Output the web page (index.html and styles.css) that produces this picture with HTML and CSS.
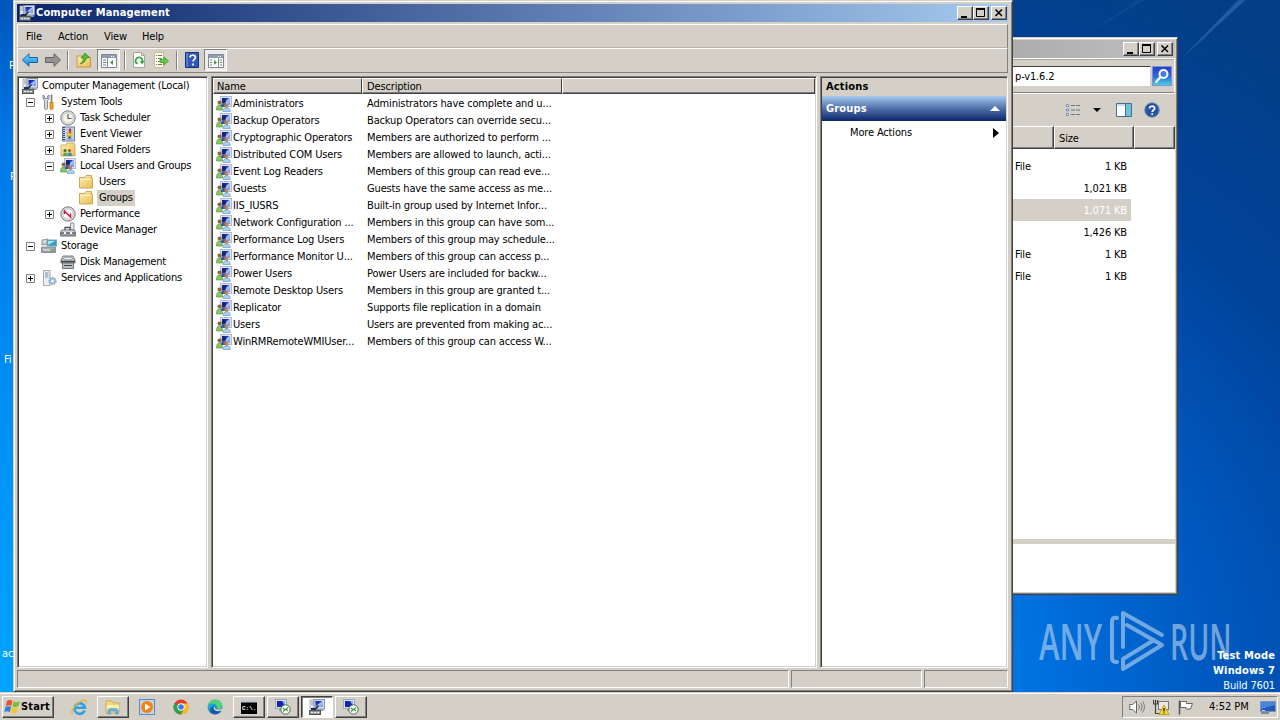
FILE: index.html
```html
<!DOCTYPE html>
<html lang="en">
<head>
    <meta charset="UTF-8">
    <meta name="viewport" content="width=device-width, initial-scale=1.0">
    <title>Computer Management</title>
    <link rel="stylesheet" href="styles.css">
</head>
<body>
    <!-- icon set -->
    <svg class="defs" width="0" height="0">
        <defs>
            <linearGradient id="g-screen" x1="0" y1="0" x2="1" y2="1"><stop offset="0" stop-color="#0a1a9c"/><stop offset=".4" stop-color="#2440c0"/><stop offset=".5" stop-color="#a8c4f4"/><stop offset="1" stop-color="#6f92dd"/></linearGradient>
            <linearGradient id="g-folder" x1="0" y1="0" x2="1" y2="1"><stop offset="0" stop-color="#fdeeb0"/><stop offset="1" stop-color="#e8bd55"/></linearGradient>
            <linearGradient id="g-blue" x1="0" y1="0" x2="0" y2="1"><stop offset="0" stop-color="#7fd8ff"/><stop offset="1" stop-color="#0b84d8"/></linearGradient>
            <linearGradient id="g-metal" x1="0" y1="0" x2="0" y2="1"><stop offset="0" stop-color="#e4e7ea"/><stop offset="1" stop-color="#8b9198"/></linearGradient>
            <linearGradient id="g-edge" x1="0" y1="0" x2="1" y2="1"><stop offset="0" stop-color="#2fc4d6"/><stop offset="1" stop-color="#0b5bb5"/></linearGradient>
        </defs>
        <symbol id="i-mgmt" viewBox="0 0 16 16">
            <rect x="5" y="0.5" width="10.5" height="9.5" fill="#d6dbe6" stroke="#8c93a5"/>
            <rect x="6.5" y="2" width="7.5" height="6" fill="url(#g-screen)"/>
            <path d="M8 10h6l1 2H7z" fill="#9aa3b5"/>
            <rect x="1" y="1" width="3.5" height="9" fill="#e8ebef" stroke="#9299a4" stroke-width=".7"/>
            <path d="M2 3h2M2 5h2" stroke="#6f7780" stroke-width=".7"/>
            <path d="M2 9h4l3-3 1 1-3 4H2z" fill="#1b3050"/>
            <rect x="0.5" y="11.5" width="11" height="4" fill="#8e9897" stroke="#4e5859"/>
            <path d="M2 13.500h2m1 0h2m1 0h2" stroke="#e8eeee"/>
        </symbol>
        <symbol id="i-users" viewBox="0 0 16 16">
            <rect x="4.500" y="0.500" width="11" height="10" fill="#dfe3f4" stroke="#b2b8dc"/>
            <rect x="6" y="2" width="8" height="7" fill="url(#g-screen)"/>
            <circle cx="3.600" cy="6.500" r="2.100" fill="#8a6a3c"/>
            <path d="M0.500 14c0-4 1-5 3-5s3 1 3 5z" fill="#8cc65e" stroke="#4c8a32" stroke-width=".6"/>
            <circle cx="8" cy="4.800" r="2.200" fill="#1d2768"/>
            <path d="M5 11c0-3 1-4 3-4s3.500 1 3.500 4z" fill="#3c56a8"/>
            <path d="M7.500 7.500l1 2.500 1-2.500z" fill="#d8553f"/>
            <circle cx="10.500" cy="10" r="1.900" fill="#b58a52"/>
            <path d="M7 15.500c0-2.800 1.200-3.600 3.600-3.600s3.700.8 3.700 3.600z" fill="#a6d1f0" stroke="#5d8fbd" stroke-width=".6"/>
        </symbol>
        <symbol id="i-folder" viewBox="0 0 16 16">
            <path d="M1.500 3.500h5l1.500-2h5.500v3h1v9.500h-13z" fill="url(#g-folder)" stroke="#c9a04a" stroke-width=".9"/>
            <path d="M2.500 5.500h11" stroke="#fff6cf"/>
        </symbol>
        <symbol id="i-tools" viewBox="0 0 16 16">
            <path d="M2 1v4l1.500 1.500V14c0 2 3 2 3 0V6.500L8 5V1L6.500 2v2.500h-3V2z" fill="#d8dce0" stroke="#6f767d" stroke-width=".8"/>
            <path d="M10.500 0.500v7" stroke="#777" stroke-width="1.600"/>
            <path d="M9 8h3v6.500c0 1.300-3 1.300-3 0z" fill="#f7a51b" stroke="#c9680b" stroke-width=".8"/>
        </symbol>
        <symbol id="i-clock" viewBox="0 0 16 16">
            <circle cx="8" cy="8" r="7.200" fill="#dfe3e9" stroke="#747a83"/>
            <circle cx="8" cy="8" r="5.300" fill="#f8f4e4" stroke="#b7b19b" stroke-width=".6"/>
            <path d="M8 4v4.500h3.500" fill="none" stroke="#525c72" stroke-width="1.200"/>
        </symbol>
        <symbol id="i-event" viewBox="0 0 16 16">
            <rect x="2.500" y="1" width="12" height="14" fill="#c8d4ec" stroke="#6d7f9f"/>
            <path d="M4 1v14" stroke="#2f4571" stroke-width="2" stroke-dasharray="1 1"/>
            <path d="M6.500 4h6M6.500 7h6M6.500 10h6M6.500 13h6" stroke="#7f92bd"/>
            <path d="M9 2.500h2V7H9z" fill="#d93321"/><path d="M7 7.500l5-1v5H7z" fill="#f1bd1c"/><circle cx="9.500" cy="11.500" r="1.300" fill="#1f53b8"/>
        </symbol>
        <symbol id="i-shared" viewBox="0 0 16 16">
            <path d="M1 3h5l1-2h7v2h1v11H1z" fill="url(#g-folder)" stroke="#c9a04a" stroke-width=".8"/>
            <circle cx="5" cy="8.500" r="1.500" fill="#347734"/><path d="M3 14c0-2.500.8-3.500 2.200-3.500S7.500 11.500 7.500 14z" fill="#54a84a"/>
            <circle cx="9.500" cy="8.500" r="1.500" fill="#9d5a22"/><path d="M7.500 14c0-2.500.8-3.500 2.200-3.500s2.300 1 2.300 3.500z" fill="#3f87cb"/>
        </symbol>
        <symbol id="i-perf" viewBox="0 0 16 16">
            <circle cx="8" cy="8" r="7.200" fill="#e2e2e2" stroke="#777"/>
            <circle cx="8" cy="8" r="5.200" fill="#fff" stroke="#aaa" stroke-width=".7"/>
            <path d="M4.500 8V5l6 6V7.500" fill="none" stroke="#d11c3c" stroke-width="1.500"/>
        </symbol>
        <symbol id="i-device" viewBox="0 0 16 16">
            <path d="M10.500 1h3.500v7h-3.500z" fill="#e5e8eb" stroke="#7c838b" stroke-width=".8"/>
            <path d="M5 8V5.500h5V8" fill="none" stroke="#4c5258" stroke-width="1.300"/>
            <path d="M2 8h12l1.500 2v4H0.500v-4z" fill="url(#g-metal)" stroke="#4f565e" stroke-width=".8"/>
            <path d="M1 11h14" stroke="#373d45"/><path d="M4 10h2v2H4zM10 10h2v2h-2z" fill="#eef"/>
        </symbol>
        <symbol id="i-storage" viewBox="0 0 16 16">
            <path d="M1 2l6-1v5l-6 1zM0.500 9h14v5.500h-14z" fill="url(#g-metal)" stroke="#7b8289" stroke-width=".8"/>
            <rect x="6" y="2" width="9.500" height="6" fill="#2e9fca" stroke="#8da4af"/>
            <path d="M7 3h7L7 7z" fill="#a9e2f4"/>
            <path d="M2 12h7" stroke="#fff"/><path d="M11 11h2v2h-2z" fill="#58c14d"/>
        </symbol>
        <symbol id="i-disk" viewBox="0 0 16 16">
            <path d="M3 2h10l2 4v3H1V6z" fill="url(#g-metal)" stroke="#555b61" stroke-width=".8"/>
            <ellipse cx="8" cy="4.500" rx="4.500" ry="1.500" fill="#f0f2f3" stroke="#686e74" stroke-width=".7"/>
            <path d="M2.500 9h11v5.500h-11z" fill="#b9bec3" stroke="#555b61" stroke-width=".8"/>
            <path d="M1 7.500h14M4 11.500h8" stroke="#3f454b"/>
        </symbol>
        <symbol id="i-services" viewBox="0 0 16 16">
            <rect x="2.500" y="0.500" width="6.500" height="15" fill="#edf0f3" stroke="#a7adb5"/>
            <path d="M4 3h3.500M4 5h3.500M4 7h3.500" stroke="#6e94b5"/>
            <circle cx="11.500" cy="11" r="3.200" fill="#c6dced" stroke="#7fa9cb" stroke-width="2" stroke-dasharray="1.400 1"/>
            <circle cx="11.500" cy="11" r="2.500" fill="#c6dced" stroke="#7fa9cb"/><circle cx="11.500" cy="11" r="1" fill="#fff"/>
        </symbol>
        <symbol id="i-plus" viewBox="0 0 9 9"><path d="M.5.500h8v8h-8z" fill="#fff" stroke="#808080"/><path d="M2 4.500h5M4.500 2v5" stroke="#000"/></symbol>
        <symbol id="i-minus" viewBox="0 0 9 9"><path d="M.5.500h8v8h-8z" fill="#fff" stroke="#808080"/><path d="M2 4.500h5" stroke="#000"/></symbol>
        <symbol id="i-back" viewBox="0 0 16 14"><path d="M.5 7L7 .7v3.800h8.500v5H7v3.800z" fill="url(#g-blue)" stroke="#1769a8"/></symbol>
        <symbol id="i-fwd" viewBox="0 0 16 14"><path d="M15.500 7L9 .7v3.800H.5v5H9v3.800z" fill="#939393" stroke="#626262"/></symbol>
        <symbol id="i-up" viewBox="0 0 16 16">
            <path d="M1 4h5l1.500 1.500H14.500V15H1z" fill="url(#g-folder)" stroke="#c59a3c"/>
            <path d="M4 12c3-2 3.500-4 3.500-6H5L9 1l4.500 4.500-3 .5c-1 3-3 5.500-6.500 6z" fill="#4fbc31" stroke="#267e1b" stroke-width=".6"/>
        </symbol>
        <symbol id="i-pane-l" viewBox="0 0 16 14">
            <path d="M.5.500h15v13H.5z" fill="#fff" stroke="#7f8792"/><path d="M1 1h14v3H1z" fill="#8f9cb2"/><path d="M10 2.500h4" stroke="#fff" stroke-dasharray="1 1"/>
            <path d="M6.500 4v9" stroke="#7f8792"/><path d="M2 6h3M2 8.500h3M2 11h3" stroke="#697788"/><path d="M12 6v5L9 8.500z" fill="#38a52c"/>
        </symbol>
        <symbol id="i-pane-r" viewBox="0 0 16 14">
            <path d="M.5.500h15v13H.5z" fill="#fff" stroke="#7f8792"/><path d="M1 1h14v3H1z" fill="#8f9cb2"/><path d="M10 2.500h4" stroke="#fff" stroke-dasharray="1 1"/>
            <path d="M10.500 4v9" stroke="#7f8792"/><path d="M12 6h2M12 8.500h2M12 11h2M2 6h2M2 8.500h2M2 11h2" stroke="#697788"/><path d="M6 6v5l3-2.500z" fill="#38a52c"/>
        </symbol>
        <symbol id="i-refresh" viewBox="0 0 16 16">
            <path d="M2.500.5h8l3 3v12h-11z" fill="#fff" stroke="#a2a9a2"/><path d="M10.500.5v3h3" fill="none" stroke="#a2a9a2"/>
            <path d="M6.500 11.800A3.400 3.400 0 1 1 11.300 9.500" fill="none" stroke="#36a537" stroke-width="1.700"/><path d="M9 9h4.500L11 12.500z" fill="#36a537"/>
        </symbol>
        <symbol id="i-export" viewBox="0 0 16 16">
            <path d="M1.500.5h9v15h-9z" fill="#fffce2" stroke="#c3bd91"/><path d="M3 3.500h1M5 3.500h4M3 6.500h1M5 6.500h4M3 9.500h1M5 9.500h3M3 12.500h1M5 12.500h4" stroke="#6d728a"/>
            <path d="M7 7.500h4V5l4.500 4-4.500 4v-2.500H7z" fill="#69c943" stroke="#32942b" stroke-width=".7"/>
        </symbol>
        <symbol id="i-help" viewBox="0 0 14 16">
            <path d="M.5.500h13v15H.5z" fill="#3159b8" stroke="#162f7c"/><path d="M2 1v14" stroke="#849fe0"/>
            <path d="M5 5.500C5 2.500 10.500 2.500 10.500 5.300c0 2-2.500 2-2.500 4.200M8 11.500v2" fill="none" stroke="#fff" stroke-width="1.700"/>
        </symbol>
        <symbol id="i-min" viewBox="0 0 16 14"><path d="M4 10h6v2H4z"/></symbol>
        <symbol id="i-max" viewBox="0 0 16 14"><path d="M3.500 3h8v7.500h-8z" fill="none" stroke="#000"/><path d="M3 2h9v2H3z"/></symbol>
        <symbol id="i-close" viewBox="0 0 16 14"><path d="M4.500 3.500l6.500 6.500M11 3.500L4.500 10" stroke="#000" stroke-width="1.500"/></symbol>
        <symbol id="i-rdp" viewBox="0 0 16 16">
            <rect x="0.500" y="0.500" width="11" height="9" fill="#d9dee8" stroke="#a0a7b8"/><path d="M2 2h7v6H2z" fill="#1225b0"/><path d="M7 2h3v5z" fill="#8fb0f2"/>
            <path d="M4 10h4v2H4z" fill="#98a1b2"/><circle cx="10.500" cy="10.500" r="4.700" fill="#f4f7f2" stroke="#4e6a55"/>
            <path d="M8 9l2 1.800-2 1.700M13 8.500l-2 1.700 2 1.700" fill="none" stroke="#2d9a34" stroke-width="1.100"/>
        </symbol>
    </svg>

    <div class="desktop">
        <svg class="rays" width="1280" height="692" viewBox="0 0 1280 692"><path d="M1180 60L1252-6L1244-6z" fill="#7db6e8" opacity=".25"/><path d="M1090 32L1155-6L1146-6z" fill="#7db6e8" opacity=".08"/></svg>
        <span class="shortcut s1">P</span>
        <span class="shortcut s2">P</span>
        <span class="shortcut s3">Fi</span>
        <span class="shortcut s4">ac</span>

        <!-- explorer window in the back -->
        <div class="window explorer">
            <div class="titlebar inactive">
                <div class="win-buttons">
                    <span class="wbtn"><svg><use href="#i-min"/></svg></span><span class="wbtn"><svg><use href="#i-max"/></svg></span><span class="wbtn close"><svg><use href="#i-close"/></svg></span>
                </div>
            </div>
            <div class="address-row">
                <div class="address">p-v1.6.2</div>
                <div class="search"><svg width="18" height="18" viewBox="0 0 18 18"><circle cx="10.500" cy="7" r="4" fill="#4a78ee" stroke="#fff" stroke-width="2"/><path d="M7.500 10L3.500 14.500" stroke="#fff" stroke-width="2.600" stroke-linecap="round"/></svg></div>
            </div>
            <div class="ex-tools">
                <svg width="16" height="14" viewBox="0 0 16 14"><g fill="#fff" stroke="#7791b5"><path d="M1.500 1.500h2v2h-2zM1.500 6h2v2h-2zM1.500 10.500h2v2h-2z"/></g><path d="M6 2.500h4m1 0h4M6 7h4m1 0h4M6 11.500h4m1 0h4" stroke="#68778d"/></svg>
                <svg class="caret" width="8" height="4" viewBox="0 0 8 4"><path d="M0 0h8L4 4z"/></svg>
                <svg class="preview" width="16" height="14" viewBox="0 0 16 14"><path d="M.5.500h15v13H.5z" fill="#fff" stroke="#456d99"/><path d="M1 2h9" stroke="#9ab4cf"/><path d="M10 1h5v12h-5z" fill="#6cc5d3"/><path d="M9.500 1v12" stroke="#456d99"/></svg>
                <svg class="qmark" width="16" height="16" viewBox="0 0 16 16"><circle cx="8" cy="8" r="7.300" fill="#2653a8" stroke="#8693aa"/><path d="M5.500 6.500C5.500 3.500 10.700 3.500 10.700 6.300 10.700 8 8.200 8 8.200 10M8.200 11.300v1.700" fill="none" stroke="#fff" stroke-width="1.700"/></svg>
            </div>
            <div class="ex-head"><span class="c-type"></span><span class="c-size">Size</span><span class="c-rest"></span></div>
            <div class="ex-list">
                <div class="ex-row"><span>File</span><span>1 KB</span></div>
                <div class="ex-row"><span></span><span>1,021 KB</span></div>
                <div class="ex-row selected"><span></span><span>1,071 KB</span></div>
                <div class="ex-row"><span></span><span>1,426 KB</span></div>
                <div class="ex-row"><span>File</span><span>1 KB</span></div>
                <div class="ex-row"><span>File</span><span>1 KB</span></div>
            </div>
            <div class="ex-details"></div>
        </div>

        <!-- computer management window -->
        <div class="window mmc">
            <div class="titlebar">
                <svg class="icon"><use href="#i-mgmt"/></svg>
                <span class="title">Computer Management</span>
                <div class="win-buttons">
                    <span class="wbtn"><svg><use href="#i-min"/></svg></span><span class="wbtn"><svg><use href="#i-max"/></svg></span><span class="wbtn close"><svg><use href="#i-close"/></svg></span>
                </div>
            </div>
            <div class="menubar"><span class="m-file">File</span><span class="m-action">Action</span><span class="m-view">View</span><span>Help</span></div>
            <div class="toolbar">
                <svg class="arrow"><use href="#i-back"/></svg>
                <svg class="arrow fwd"><use href="#i-fwd"/></svg>
                <i class="sep"></i>
                <svg class="icon"><use href="#i-up"/></svg>
                <span class="pressed"><svg><use href="#i-pane-l"/></svg></span>
                <i class="sep sep2"></i>
                <svg class="icon"><use href="#i-refresh"/></svg>
                <svg class="icon export"><use href="#i-export"/></svg>
                <i class="sep sep3"></i>
                <svg class="icon help"><use href="#i-help"/></svg>
                <span class="pressed"><svg><use href="#i-pane-r"/></svg></span>
            </div>
            <div class="panes">
                <div class="pane tree">
                    <div class="node root"><svg class="icon"><use href="#i-mgmt"/></svg><span>Computer Management (Local)</span></div>
                    <div class="node l1"><svg class="box"><use href="#i-minus"/></svg><svg class="icon"><use href="#i-tools"/></svg><span>System Tools</span></div>
                    <div class="node l2"><svg class="box"><use href="#i-plus"/></svg><svg class="icon"><use href="#i-clock"/></svg><span>Task Scheduler</span></div>
                    <div class="node l2"><svg class="box"><use href="#i-plus"/></svg><svg class="icon"><use href="#i-event"/></svg><span>Event Viewer</span></div>
                    <div class="node l2"><svg class="box"><use href="#i-plus"/></svg><svg class="icon"><use href="#i-shared"/></svg><span>Shared Folders</span></div>
                    <div class="node l2"><svg class="box"><use href="#i-minus"/></svg><svg class="icon"><use href="#i-users"/></svg><span>Local Users and Groups</span></div>
                    <div class="node l3"><svg class="icon"><use href="#i-folder"/></svg><span>Users</span></div>
                    <div class="node l3"><svg class="icon"><use href="#i-folder"/></svg><span class="current">Groups</span></div>
                    <div class="node l2"><svg class="box"><use href="#i-plus"/></svg><svg class="icon"><use href="#i-perf"/></svg><span>Performance</span></div>
                    <div class="node l2"><i class="box"></i><svg class="icon"><use href="#i-device"/></svg><span>Device Manager</span></div>
                    <div class="node l1"><svg class="box"><use href="#i-minus"/></svg><svg class="icon"><use href="#i-storage"/></svg><span>Storage</span></div>
                    <div class="node l2"><i class="box"></i><svg class="icon"><use href="#i-disk"/></svg><span>Disk Management</span></div>
                    <div class="node l1"><svg class="box"><use href="#i-plus"/></svg><svg class="icon"><use href="#i-services"/></svg><span>Services and Applications</span></div>
                </div>
                <div class="pane list">
                    <div class="list-head"><span>Name</span><span class="h-desc">Description</span><span></span></div>
                    <div class="item"><svg class="icon"><use href="#i-users"/></svg><span class="name">Administrators</span><span>Administrators have complete and u...</span></div>
                    <div class="item"><svg class="icon"><use href="#i-users"/></svg><span class="name">Backup Operators</span><span>Backup Operators can override secu...</span></div>
                    <div class="item"><svg class="icon"><use href="#i-users"/></svg><span class="name">Cryptographic Operators</span><span>Members are authorized to perform ...</span></div>
                    <div class="item"><svg class="icon"><use href="#i-users"/></svg><span class="name">Distributed COM Users</span><span>Members are allowed to launch, acti...</span></div>
                    <div class="item"><svg class="icon"><use href="#i-users"/></svg><span class="name">Event Log Readers</span><span>Members of this group can read eve...</span></div>
                    <div class="item"><svg class="icon"><use href="#i-users"/></svg><span class="name">Guests</span><span>Guests have the same access as me...</span></div>
                    <div class="item"><svg class="icon"><use href="#i-users"/></svg><span class="name">IIS_IUSRS</span><span>Built-in group used by Internet Infor...</span></div>
                    <div class="item"><svg class="icon"><use href="#i-users"/></svg><span class="name">Network Configuration ...</span><span>Members in this group can have som...</span></div>
                    <div class="item"><svg class="icon"><use href="#i-users"/></svg><span class="name">Performance Log Users</span><span>Members of this group may schedule...</span></div>
                    <div class="item"><svg class="icon"><use href="#i-users"/></svg><span class="name">Performance Monitor U...</span><span>Members of this group can access p...</span></div>
                    <div class="item"><svg class="icon"><use href="#i-users"/></svg><span class="name">Power Users</span><span>Power Users are included for backw...</span></div>
                    <div class="item"><svg class="icon"><use href="#i-users"/></svg><span class="name">Remote Desktop Users</span><span>Members in this group are granted t...</span></div>
                    <div class="item"><svg class="icon"><use href="#i-users"/></svg><span class="name">Replicator</span><span>Supports file replication in a domain</span></div>
                    <div class="item"><svg class="icon"><use href="#i-users"/></svg><span class="name">Users</span><span>Users are prevented from making ac...</span></div>
                    <div class="item"><svg class="icon"><use href="#i-users"/></svg><span class="name">WinRMRemoteWMIUser...</span><span>Members of this group can access W...</span></div>
                </div>
                <div class="pane actions">
                    <div class="actions-head">Actions</div>
                    <div class="actions-group">Groups <svg width="10" height="5" viewBox="0 0 10 5"><path d="M0 5h10L5 0z" fill="#fff"/></svg></div>
                    <div class="actions-item">More Actions <svg width="6" height="10" viewBox="0 0 6 10"><path d="M0 0v10l6-5z"/></svg></div>
                </div>
            </div>
            <div class="statusbar"><span></span><span></span><span></span></div>
        </div>

        <!-- desktop marks -->
        <div class="watermark">
            <span>ANY</span>
            <svg width="56" height="62" viewBox="0 0 56 62"><g fill="none" stroke="currentColor" stroke-width="4" stroke-linejoin="round" stroke-linecap="round"><path d="M7 8C3 7 2 9 2 12v36c0 3 2 4 5 4M13 37V3l39 22M17 15l35 20L13 59V49l31-19"/></g></svg>
            <span class="run">RUN</span>
        </div>
        <div class="build"><b>Test Mode</b><b>Windows 7</b><span>Build 7601</span></div>
    </div>

    <div class="taskbar">
        <div class="start">
            <svg width="17" height="16" viewBox="0 0 17 16"><path d="M3 2c2-1.500 4-1 5.500 0L7.300 7C5.500 6 4 6 1.800 7z" fill="#e8512a"/><path d="M9.500 2.500c2 1 4 1 6.500-.5l-1.500 5c-2 1.500-4 1.300-6 .5z" fill="#7abd32"/><path d="M1.500 8C3.500 7 5 7 7 8l-1.200 5c-2-1-3.500-1-5.500 0z" fill="#2e7fd6"/><path d="M8.200 8.500c2 1 4 .8 6-.5l-1.400 5c-2 1.400-4 1.200-6 .3z" fill="#f8c520"/></svg>
            <b>Start</b>
        </div>
        <div class="tasks">
            <span class="task flat"><svg width="17" height="17" viewBox="0 0 17 17"><path d="M13.700 11.500A5.300 5.300 0 1 1 14 8.700H4.500" fill="none" stroke="#2ea2e4" stroke-width="2.600"/><path d="M1.500 15C-1 12 5 4 11 1.700c4-1.500 5 0 4 2.500" fill="none" stroke="#e7b32e" stroke-width="1.300"/></svg></span>
            <span class="task raised"><svg width="16" height="16" viewBox="0 0 16 16"><path d="M1 2h6l1 2h6v10H1z" fill="#f3d675" stroke="#c6a243" stroke-width=".7"/><path d="M2 6h12v5H2z" fill="#fdf0b4"/><path d="M3 15v-4.500C3 9 13 9 13 10.500V15h-2.500v-3h-5v3z" fill="#69b4e2" stroke="#4290c3" stroke-width=".5"/></svg></span>
            <span class="task flat"><svg width="16" height="16" viewBox="0 0 16 16"><rect x=".5" y=".5" width="15" height="15" fill="#bcd6ee" stroke="#5b8cbd"/><circle cx="8" cy="8" r="6" fill="#f38115"/><path d="M6 4.500v7L11.500 8z" fill="#fff"/></svg></span>
            <span class="task flat"><svg width="16" height="16" viewBox="0 0 16 16"><circle cx="8" cy="8" r="7.500" fill="#e33b2e"/><path d="M1.500 4.200A7.500 7.500 0 0 0 7.400 15.500L11.200 9.500 8 8z" fill="#2ba24c"/><path d="M14.600 4.500H8L11.300 10l-3.500 5.500A7.500 7.500 0 0 0 14.600 4.500z" fill="#fbc116"/><circle cx="8" cy="8" r="3.700" fill="#fff"/><circle cx="8" cy="8" r="2.800" fill="#3c7be8"/></svg></span>
            <span class="task flat"><svg width="16" height="16" viewBox="0 0 16 16"><circle cx="8" cy="8" r="7.500" fill="url(#g-edge)"/><path d="M1 6C3-1 15-1 15.500 7c0 3-4 4-6 2.500C11 7 8 4 5 4.500 3 4.700 2 5 1 6z" fill="#50d07c"/><path d="M7 7c-2 3 1 6.500 7 5-2 3-6 4-9 2.500S3 8 7 7z" fill="#1559a9"/><path d="M8 7c-1 2 1 4 5 3.500l2.500-1.200V11c-4 2.500-9 1-8.800-2z" fill="#d5d2ca"/></svg></span>
            <span class="task raised"><svg width="16" height="14" viewBox="0 0 16 14"><path d="M0 0h16v14H0z" fill="#000"/><path d="M0 0h16v2.500H0z" fill="#c3c8d2"/><text x="1" y="10" class="cmd">C:\.</text></svg></span>
            <span class="task raised"><svg class="icon"><use href="#i-rdp"/></svg></span>
            <span class="task active"><svg class="icon"><use href="#i-mgmt"/></svg></span>
            <span class="task raised"><svg class="icon"><use href="#i-rdp"/></svg></span>
        </div>
        <div class="tray">
            <svg width="16" height="14" viewBox="0 0 16 14"><path d="M.7 4.500h3L7.500 1v12L3.700 9.500h-3z" fill="#fff" stroke="#666"/><path d="M9.500 4.500c1.200 1.500 1.200 3.500 0 5M11.500 3c2 2.300 2 5.700 0 8M13.500 1.500c2.600 3.300 2.600 7.700 0 11" fill="none" stroke="#777"/></svg>
            <svg width="17" height="16" viewBox="0 0 17 16"><rect x="5.500" y="2.500" width="10" height="8" fill="#e6e6e6" stroke="#777"/><path d="M.5 1v4h4V1M2.500 1v13.500h5" fill="none" stroke="#444" stroke-width="1.200"/><path d="M11 6l5 9.500H6z" fill="#f9d72b" stroke="#b58b06" stroke-width=".7"/><path d="M11 9v3.500m0 1v1" stroke="#111" stroke-width="1.300"/></svg>
            <svg width="16" height="15" viewBox="0 0 16 15"><path d="M1.500.5v14" stroke="#555" stroke-width="1.500"/><path d="M2.500 1.500h6v2h6l-2 5.500H8V7.500H2.500z" fill="#fff" stroke="#666"/></svg>
            <span class="clock">4:52 PM</span>
            <svg width="16" height="13" viewBox="0 0 16 13"><path d="M.5.500h15v10H.5z" fill="#2458b8" stroke="#7d92ba"/><path d="M1 1h14v3L1 8z" fill="#4685da"/><path d="M1 12h8" stroke="#274475"/><path d="M2 9.500h3" stroke="#bfe0fb"/></svg>
        </div>
    </div>
</body>
</html>
```
FILE: styles.css
```css
* { box-sizing: border-box; }
body {
    margin: 0;
    width: 1280px;
    height: 720px;
    overflow: hidden;
    font-family: Tahoma, "DejaVu Sans Condensed", "DejaVu Sans", sans-serif;
    font-stretch: condensed;
    font-size: 11px;
    line-height: 16px;
    letter-spacing: -0.15px;
    color: #000;
    white-space: nowrap;
}
b { letter-spacing: 0.15px; }
svg { display: block; flex: none; }
.defs { position: absolute; }
.icon { width: 16px; height: 16px; }

/* desktop */
.desktop {
    position: relative;
    height: 692px;
    overflow: hidden;
    background: radial-gradient(ellipse 1320px 740px at 10px 690px, #00a4ff 0%, #0091f5 35%, #0078e8 74%, #0059c0 91%, #00439a 108%, #043e86 130%);
}
.rays { position: absolute; left: 0; top: 0; }
.shortcut { position: absolute; color: #fff; }
.s1 { left: 9px; top: 58px; }
.s2 { left: 10px; top: 169px; }
.s3 { left: 4px; top: 352px; }
.s4 { left: 2px; top: 646px; }

/* windows */
.window {
    position: absolute;
    background: #d4d0c8;
    border: 1px solid;
    border-color: #d4d0c8 #404040 #404040 #d4d0c8;
    box-shadow: inset 1px 1px #fff, inset -1px -1px #808080;
    display: flex;
    flex-direction: column;
}
.titlebar {
    height: 18px;
    flex: none;
    display: flex;
    align-items: center;
    padding: 0 1px 0 2px;
    background: linear-gradient(90deg, #0a246a, #a6caf0);
}
.inactive { background: linear-gradient(90deg, #a0a0a0, #c0c0c0); }
.title { color: #fff; font-weight: bold; margin-left: 1px; letter-spacing: 0.15px; }
.win-buttons { display: flex; margin-left: auto; }
.wbtn {
    width: 16px;
    height: 14px;
    background: #d4d0c8;
    border: 1px solid;
    border-color: #fff #404040 #404040 #fff;
    box-shadow: inset -1px -1px #808080;
}
.wbtn svg { width: 16px; height: 14px; margin: -1px 0 0 -1px; }
.close { margin-left: 2px; }

.mmc { left: 13px; top: 0; width: 1000px; height: 692px; padding: 3px 4px 3px 3px; }
.menubar {
    display: flex;
    align-items: center;
    height: 24px;
    margin-top: 2px;
    padding: 1px 0 0 8px;
    border: 1px solid #808080;
    border-color: #fff #808080 #b5b1a9 #fff;
    flex: none;
}
.m-file { width: 32px; }
.m-action { width: 46px; }
.m-view { width: 38px; }
.toolbar {
    display: flex;
    align-items: center;
    height: 25px;
    flex: none;
    padding: 0 0 1px 4px;
    border: 1px solid;
    border-color: #fff #808080 #808080 #fff;
}
.arrow { width: 16px; height: 14px; }
.fwd { margin-left: 7px; }
.sep {
    width: 2px;
    height: 19px;
    margin: 0 7px 0 6px;
    border-left: 1px solid #808080;
    border-right: 1px solid #fff;
}
.sep2 { margin: 0 5px 0 4px; }
.sep3 { margin: 0 7px; }
.pressed {
    width: 23px;
    height: 22px;
    margin-left: 5px;
    padding: 4px 3px;
    background: #eeece8;
    border: 1px solid;
    border-color: #808080 #fff #fff #808080;
}
.pressed svg { width: 16px; height: 14px; }
.export { margin-left: 6px; }
.help { width: 14px; }

.panes { display: flex; gap: 3px; height: 592px; margin-top: 3px; flex: none; }
.pane {
    background: #fff;
    border: 1px solid;
    border-color: #808080 #fff #fff #808080;
    box-shadow: inset 1px 1px #404040, inset -1px -1px #d4d0c8;
    padding: 1px;
}
.tree { width: 191px; letter-spacing: -0.25px; }
.list { width: 606px; }
.actions { flex: 1; }
.node { display: flex; align-items: center; height: 16px; }
.node span { padding: 0 3px 0 2px; margin-left: 2px; }
.root { padding-left: 3px; }
.l1 { padding-left: 7px; }
.l2 { padding-left: 26px; }
.l3 { padding-left: 59px; }
.box { width: 9px; height: 9px; margin-right: 6px; }
.l3 span { margin-left: 3px; padding: 0 2px; }
.node .current { background: #d4d0c8; }

.list-head { display: flex; height: 16px; }
.list-head span {
    flex: 1;
    background: #d4d0c8;
    border: 1px solid;
    border-color: #fff #404040 #404040 #fff;
    box-shadow: inset 0 -1px #808080;
    padding-left: 3px;
    line-height: 16px;
}
.list-head span:first-child { flex: 0 0 149px; }
.list-head .h-desc { flex: 0 0 200px; padding-left: 4px; }
.item { display: flex; height: 17px; align-items: center; padding-left: 3px; }
.item:nth-child(2) { margin-top: 1px; }
.name { width: 135px; padding-left: 1px; }

.actions-head {
    height: 18px;
    padding-left: 4px;
    background: #d4d0c8;
    font-weight: bold;
    letter-spacing: 0.15px;
    line-height: 17px;
}
.actions-group {
    display: flex;
    align-items: center;
    justify-content: space-between;
    height: 25px;
    padding: 0 6px 0 4px;
    background: linear-gradient(#a6caf0, #5878b0 45%, #0a246a);
    color: #fff;
    font-weight: bold;
    letter-spacing: 0.15px;
}
.actions-item {
    display: flex;
    align-items: center;
    justify-content: space-between;
    height: 24px;
    padding: 0 7px 0 28px;
}
.statusbar { display: flex; gap: 2px; height: 18px; margin-top: 2px; flex: none; }
.statusbar span { border: 1px solid; border-color: #808080 #fff #fff #808080; }
.statusbar span:nth-child(1) { width: 772px; }
.statusbar span:nth-child(2) { width: 131px; }
.statusbar span:nth-child(3) { flex: 1; }

/* explorer */
.explorer { left: 900px; top: 37px; width: 278px; height: 558px; padding: 2px; }
.explorer .titlebar { height: 18px; padding-right: 2px; }
.address-row {
    display: flex;
    align-items: center;
    height: 35px;
    flex: none;
    gap: 1px;
    padding: 1px 2px 0 0;
    border: 1px solid;
    border-color: #fff #fff #808080;
    box-shadow: inset 0 1px #aaa69f;
}
.address {
    flex: 1;
    height: 21px;
    padding-left: 110px;
    line-height: 20px;
    background: #fff;
    border: 1px solid;
    border-color: #404040 #d4d0c8 #d4d0c8 #404040;
}
.search {
    width: 20px;
    height: 20px;
    border: 1px solid #8292c8;
    background: linear-gradient(#2340c8, #2c6fe0 55%, #48d0e0);
}
.ex-tools {
    display: flex;
    align-items: center;
    height: 33px;
    flex: none;
    padding: 0 0 1px 162px;
    border-top: 1px solid #fff;
}
.caret { margin-left: 12px; }
.preview { margin-left: 15px; }
.qmark { margin-left: 12px; }
.ex-head { display: flex; height: 23px; flex: none; }
.ex-head span {
    flex: 1;
    background: #d4d0c8;
    border: 1px solid;
    border-color: #fff #404040 #404040 #fff;
    box-shadow: inset -1px -1px #808080;
    line-height: 23px;
    padding-left: 4px;
}
.ex-head .c-type { flex: 0 0 151px; }
.ex-head .c-size { flex: 0 0 80px; }
.ex-list { height: 390px; flex: none; padding-top: 6px; background: #fff; }
.ex-row {
    display: flex;
    justify-content: space-between;
    width: 228px;
    height: 22px;
    padding: 0 4px 0 112px;
    line-height: 24px;
}
.selected { background: #d4d0c8; color: #fff; }
.ex-details { flex: 1; margin-top: 5px; background: #fff; }

/* desktop marks */
.watermark {
    position: absolute;
    left: 1039px;
    top: 610px;
    display: flex;
    align-items: center;
    color: rgba(190, 215, 240, .6);
}
.watermark span {
    font: 600 50px/62px "Open Sans", sans-serif;
    letter-spacing: 0;
    width: 62px;
    transform: scaleX(.62);
    transform-origin: left;
}
.watermark .run { transform: scaleX(.57); }
.watermark svg { margin: 0 4px 0 9px; }
.build {
    position: absolute;
    right: 5px;
    top: 648px;
    display: flex;
    flex-direction: column;
    align-items: flex-end;
    color: #fff;
    line-height: 15px;
}

/* taskbar */
.taskbar {
    display: flex;
    align-items: center;
    height: 28px;
    padding: 2px 2px 1px;
    background: #d4d0c8;
    border-top: 1px solid #d4d0c8;
    box-shadow: inset 0 1px #fff;
}
.start, .raised {
    border: 1px solid;
    border-color: #fff #404040 #404040 #fff;
    box-shadow: inset -1px -1px #808080;
}
.start { display: flex; align-items: center; width: 52px; height: 22px; padding-left: 1px; }
.tasks { display: flex; gap: 2px; margin-left: 9px; }
.task { display: flex; align-items: center; justify-content: center; width: 32px; height: 22px; }
.active {
    background: #fff;
    border: 1px solid;
    border-color: #404040 #fff #fff #404040;
    box-shadow: inset 1px 1px #808080;
}
.cmd { font: bold 6px "Liberation Mono", monospace; fill: #fff; letter-spacing: 0; }
.tray {
    display: flex;
    align-items: center;
    gap: 8px;
    width: 156px;
    height: 22px;
    margin-left: auto;
    padding-left: 6px;
    border: 1px solid;
    border-color: #808080 #fff #fff #808080;
}
.clock { margin: 0 3px 0 7px; letter-spacing: 0; }
```
